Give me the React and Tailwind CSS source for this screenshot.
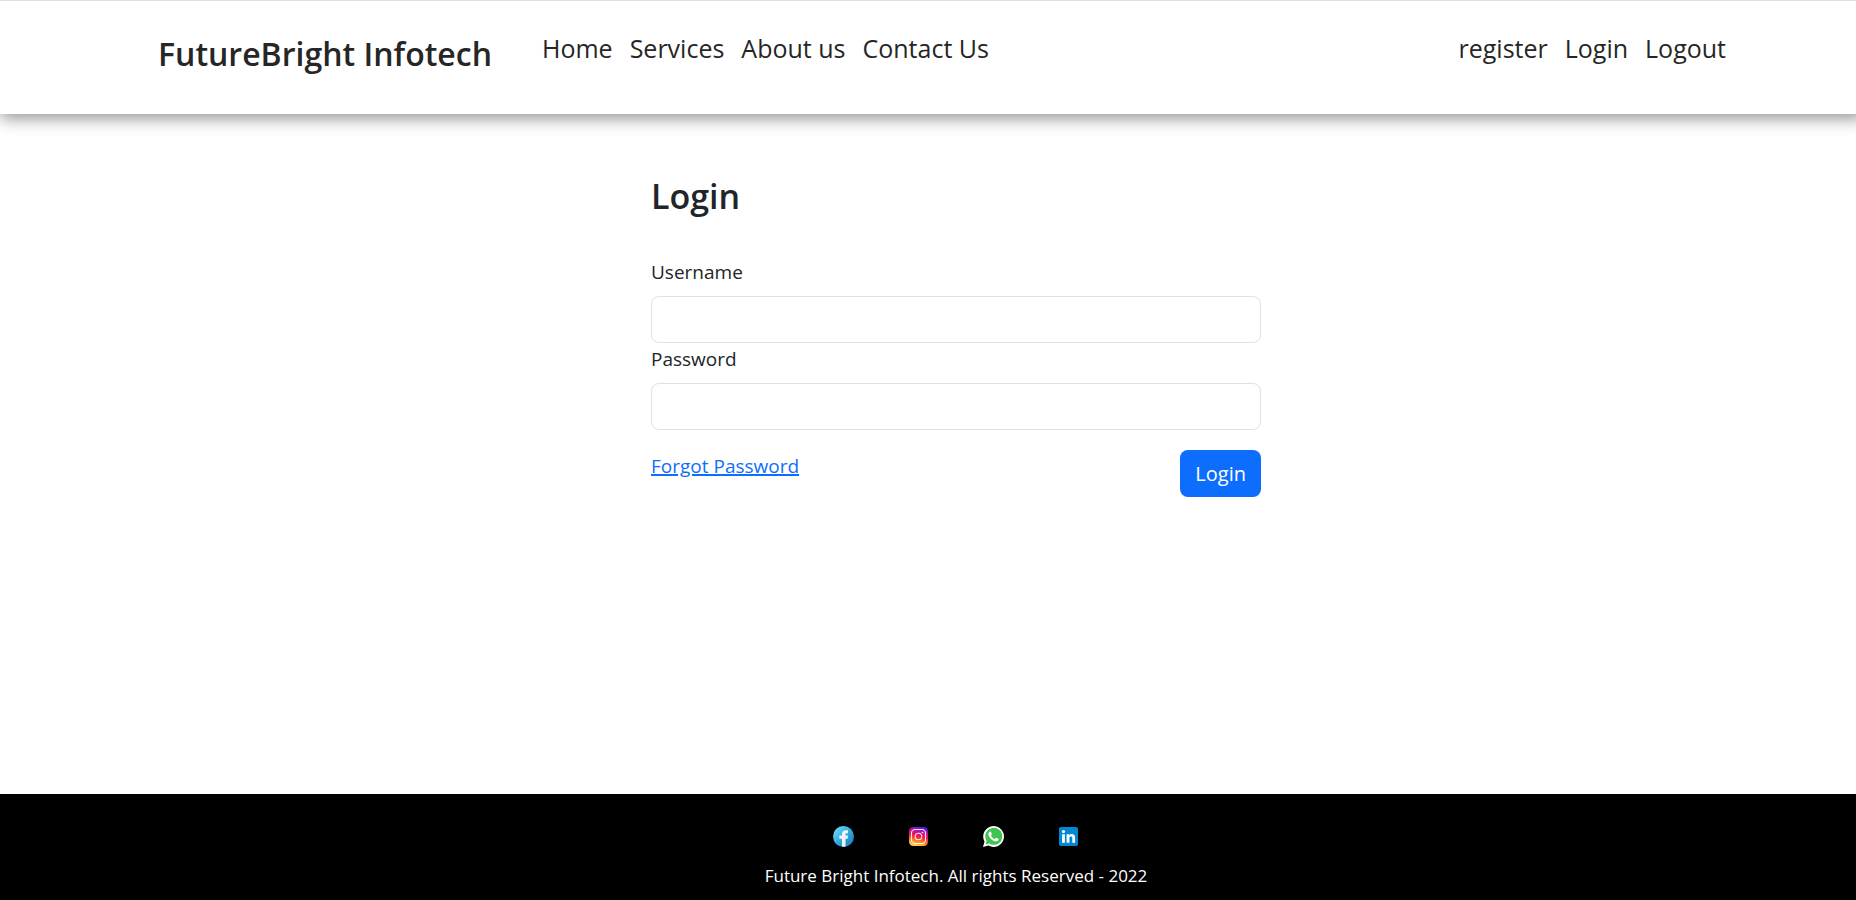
import React from "react";

const mainLinks = ["Home", "Services", "About us", "Contact Us"];
const accountLinks = ["register", "Login", "Logout"];

function NavLinks({ items, label }) {
  return (
    <nav aria-label={label}>
      <ul className="flex gap-[17px]">
        {items.map((item) => (
          <li key={item} className="text-[25px] leading-[34px]">
            <a href="#" className="text-[#262626]">
              {item}
            </a>
          </li>
        ))}
      </ul>
    </nav>
  );
}

function Header() {
  return (
    <header className="flex items-start border-t border-[#dfdfeb] bg-white pt-[30px] pr-[130px] pb-[38px] pl-[158px] shadow-[4px_1px_15px_4px_rgba(0,0,0,0.4)]">
      <h1 className="mr-[50px] text-[32px] leading-[45px] font-semibold text-[#262626]">FutureBright Infotech</h1>
      <div className="flex grow justify-between">
        <NavLinks items={mainLinks} label="Main" />
        <NavLinks items={accountLinks} label="Account" />
      </div>
    </header>
  );
}

function Field({ id, label, type }) {
  return (
    <div>
      <label htmlFor={id} className="mb-2 block text-[19px] leading-8">
        {label}
      </label>
      <input
        id={id}
        name={id}
        type={type}
        className="block h-[47px] w-full rounded-lg border border-[#dee2e6] bg-white px-4 text-[19px] outline-none focus:border-[#86b7fe]"
      />
    </div>
  );
}

function LoginForm() {
  return (
    <form className="w-full max-w-[610px]" onSubmit={(e) => e.preventDefault()}>
      <h2 className="mb-[38px] text-[34px] leading-[44px] font-semibold">Login</h2>
      <Field id="username" label="Username" type="text" />
      <Field id="password" label="Password" type="password" />
      <div className="mt-5 flex items-start justify-between">
        <a href="#" className="text-[19px] leading-8 text-[#0d6efd] underline decoration-2">
          Forgot Password
        </a>
        <button type="submit" className="h-[47px] rounded-lg bg-[#0d6efd] px-[15px] text-[20px] text-white">
          Login
        </button>
      </div>
    </form>
  );
}

function FacebookIcon() {
  return (
    <svg viewBox="0 0 21 21" className="size-[21px]" aria-hidden="true">
      <defs>
        <linearGradient id="fb" x1="0" y1="0" x2="1" y2="1">
          <stop offset="0" stopColor="#7be6fb" />
          <stop offset="0.5" stopColor="#36a9df" />
          <stop offset="1" stopColor="#1b75b8" />
        </linearGradient>
      </defs>
      <circle cx="10.5" cy="10.5" r="10.5" fill="url(#fb)" />
      <path d="M9 20.4V12.8H6.3V9.6H9V8.1C9 5.8 10.5 4.3 12.8 4.3H15V7.2H13.6C12.8 7.2 12.5 7.6 12.5 8.3V9.6H15L14.6 12.8H12.5V20.4Q10.7 21 9 20.4Z" fill="#eef4f8" />
    </svg>
  );
}

function InstagramIcon() {
  return (
    <svg viewBox="0 0 21 21" className="size-[21px]" aria-hidden="true">
      <defs>
        <linearGradient id="ig" x1="0.35" y1="1" x2="0.6" y2="0">
          <stop offset="0" stopColor="#ffd94a" />
          <stop offset="0.25" stopColor="#ff8a1c" />
          <stop offset="0.5" stopColor="#f31a4a" />
          <stop offset="0.75" stopColor="#c4109a" />
          <stop offset="1" stopColor="#4a1df0" />
        </linearGradient>
      </defs>
      <rect x="1" y="1" width="19" height="19" rx="4.5" fill="url(#ig)" />
      <rect x="3.5" y="3.5" width="14" height="14" rx="3.6" fill="none" stroke="#fff" strokeOpacity="0.9" strokeWidth="1.1" />
      <circle cx="10.5" cy="10.5" r="3.3" fill="none" stroke="#fff" strokeOpacity="0.85" strokeWidth="1.1" />
      <circle cx="14.5" cy="6.5" r="0.8" fill="#fff" />
    </svg>
  );
}

function WhatsAppIcon() {
  return (
    <svg viewBox="0 0 21 21" className="size-[21px]" aria-hidden="true">
      <path d="M0 21L1.5 15.6A10.4 10.4 0 1 1 5.5 19.6Z" fill="#fff" />
      <path d="M2.6 18.4L3.6 14.9A8.5 8.5 0 1 1 6.2 17.5Z" fill="#40c351" />
      <path d="M6.2 6C6.6 5.4 7.1 5.3 7.7 5.5L8.8 7.9C8.9 8.4 8.1 9 8 9.4C8.7 10.9 10 12.3 11.7 12.9C12.2 12.7 12.7 11.6 13.2 11.7L15.5 12.8C15.9 13.3 15.4 14.6 14.6 15C13.4 15.6 12 15.4 10 14.4C8 13.3 6.4 11.3 5.7 9.7C5.1 8.2 5.5 6.8 6.2 6Z" fill="#fff" />
    </svg>
  );
}

function LinkedInIcon() {
  return (
    <svg viewBox="0 0 21 21" className="size-[21px]" aria-hidden="true">
      <rect x="1" y="1" width="19" height="19" rx="2" fill="#0288d1" />
      <circle cx="5.5" cy="5.6" r="1.6" fill="#fff" />
      <path d="M4.1 8.3H6.9V16.8H4.1Z" fill="#fff" />
      <path d="M8.6 8.3H11.3V9.4C12 8.5 12.8 8.1 13.9 8.1C16 8.1 17.1 9.5 17.1 11.8V16.8H14.3V12.2C14.3 11.1 13.8 10.5 12.9 10.5C12 10.5 11.4 11.1 11.4 12.2V16.8H8.6Z" fill="#fff" />
    </svg>
  );
}

const socials = [
  { name: "Facebook", Icon: FacebookIcon },
  { name: "Instagram", Icon: InstagramIcon },
  { name: "WhatsApp", Icon: WhatsAppIcon },
  { name: "LinkedIn", Icon: LinkedInIcon },
];

function Footer() {
  return (
    <footer className="flex flex-col items-center bg-black pt-8 pb-[9px] pl-14 text-white">
      <div className="mb-[14px] flex gap-[54px]">
        {socials.map(({ name, Icon }) => (
          <a key={name} href="#" aria-label={name}>
            <Icon />
          </a>
        ))}
      </div>
      <p className="text-[17px] leading-[30px]">Future Bright Infotech. All rights Reserved - 2022</p>
    </footer>
  );
}

export default function App() {
  return (
    <div className="flex min-h-screen flex-col overflow-x-clip bg-white font-['Open_Sans','Noto_Sans',sans-serif] text-[#212529]">
      <Header />
      <main className="flex grow justify-center pt-[60px] pb-10 pl-14">
        <LoginForm />
      </main>
      <Footer />
    </div>
  );
}
